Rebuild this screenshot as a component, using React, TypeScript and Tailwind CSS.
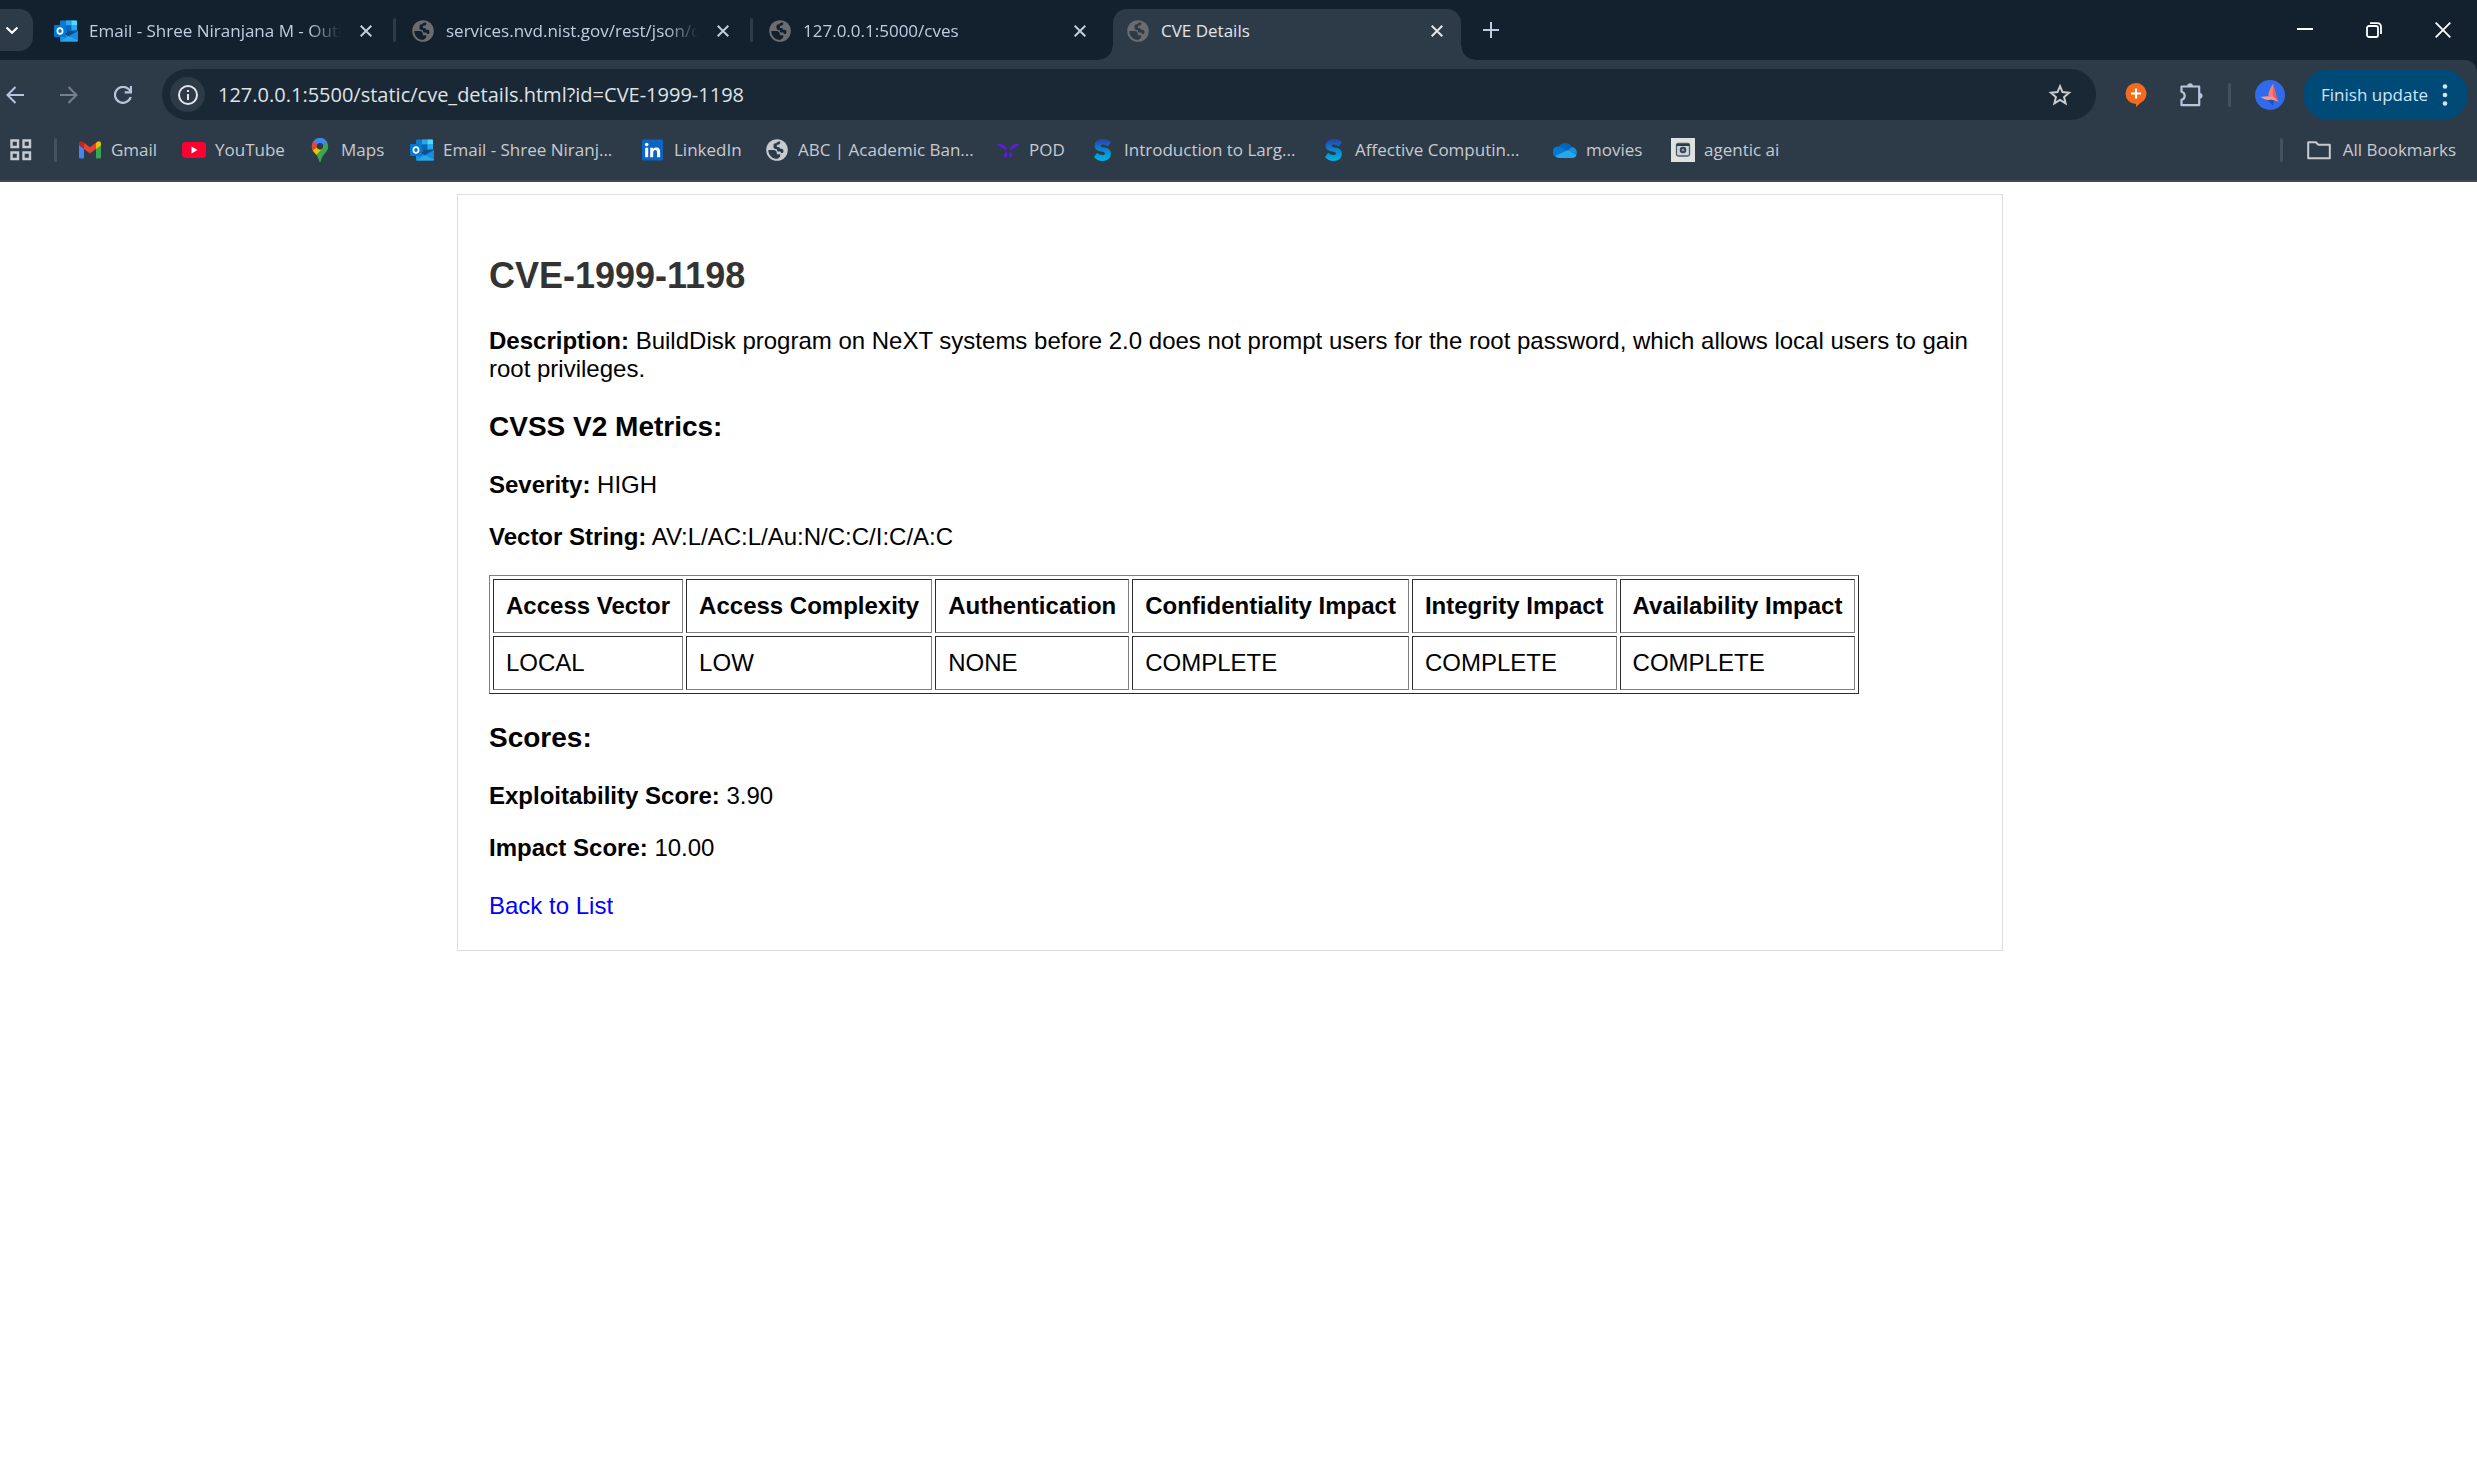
import React from "react";

const uiFont = "font-['Open_Sans','Noto_Sans',sans-serif]";

function Globe({ className, hole }: { className: string; hole: string }) {
  return (
    <svg viewBox="0 0 24 24" className={"size-6 shrink-0 " + className} fill="currentColor">
      <circle cx="12" cy="12" r="10.8" />
      <g fill={hole}>
        <path d="M3.300 12H8.500c2 0 3.300 1.200 3.300 2.900v1.300h3.400v2.400l-2.400 2.200c-5.200.4-9.500-3.400-9.500-8.800Z" />
        <path d="M15.200 3.600v1.200c0 1.100-.8 1.900-1.900 1.900h-1.400v2.200h1.400c1.100 0 1.700.8 1.700 1.800h1.500c1.100 0 1.900.8 1.900 1.900v1.200c0 .8-.7 1.300-1.400 1.300-.9 0-1.500-.6-1.700-1.500h-1.700c-1 0-1.800-.8-1.800-1.800v-.9h-1.300c-1.100 0-2-.9-2-2V7.200c0-1.100.9-1.900 1.900-1.900h.9c.4-1.300 2.100-2.100 3.900-1.700Z" />
      </g>
    </svg>
  );
}

function Outlook() {
  return (
    <svg viewBox="0 0 24 24" className="size-6 shrink-0">
      <path d="M7 1.500h15a1 1 0 0 1 1 1V14H6V2.500a1 1 0 0 1 1-1Z" fill="#0f78d4" />
      <path d="M12 1.500h5.500v5H12z" fill="#28a8ea" />
      <path d="M17.500 1.500H22a1 1 0 0 1 1 1v4h-5.500z" fill="#50d9ff" />
      <path d="M12 6.500h5.500v5H12z" fill="#0364b8" />
      <path d="M17.500 6.500H23v5h-5.500z" fill="#28a8ea" />
      <path d="M6 12.500 15 17l9-5v9.500a1 1 0 0 1-1 1H7a1 1 0 0 1-1-1Z" fill="#1490df" />
      <path d="M6 22.500 15 17l9 4.500a1 1 0 0 1-1 1Z" fill="#28a8ea" />
      <path d="M13 12 24 11.500v1l-8.500 5L13 16Z" fill="#0a4f8f" />
      <path d="M15 17l9-5v9.500Z" fill="#1b8be0" />
      <rect x="0" y="6" width="12" height="12" rx="1" fill="#0078d4" />
      <ellipse cx="6" cy="12" rx="2.600" ry="2.900" fill="none" stroke="#fff" strokeWidth="1.700" />
    </svg>
  );
}

function Gmail() {
  return (
    <svg viewBox="0 0 24 24" className="size-6 shrink-0">
      <path d="M1 20.500V6l5 3.700v10.800H2.500A1.500 1.500 0 0 1 1 19Z" fill="#4285f4" />
      <path d="M18 20.500V9.700L23 6v13a1.500 1.500 0 0 1-1.500 1.500Z" fill="#34a853" />
      <path d="M18 4.900v6l5-3.700V5.500c0-2-2.200-2.900-3.700-1.700Z" fill="#fbbc04" />
      <path d="M6 10.900V4.800l6 4.500 6-4.500v6.100l-6 4.500Z" fill="#ea4335" />
      <path d="M1 5.500v1.700l5 3.700V4.800L4.700 3.800C3.200 2.700 1 3.600 1 5.500Z" fill="#c5221f" />
    </svg>
  );
}

function YouTube() {
  return (
    <svg viewBox="0 0 24 24" className="size-6 shrink-0">
      <rect x="0" y="4" width="24" height="16" rx="4" fill="#ff0033" />
      <path d="M9.500 8.600v6.800l6-3.400Z" fill="#fff" />
    </svg>
  );
}

function Maps() {
  return (
    <svg viewBox="0 0 24 24" className="size-6 shrink-0">
      <clipPath id="pin">
        <path d="M12 0a8.200 8.200 0 0 0-8.200 8.200c0 3 1.200 4.600 3 6.900 2.200 2.600 3.300 4.200 4.200 7.400.3 1 .5 1.500 1 1.500s.7-.5 1-1.500c.9-3.200 2-4.800 4.200-7.400 1.800-2.300 3-3.900 3-6.900A8.200 8.200 0 0 0 12 0Z" />
      </clipPath>
      <g clipPath="url(#pin)">
        <path d="M0 0h24v24H0z" fill="#34a853" />
        <path d="M0 10 5 12 12 8 16 9 7 18 0 16Z" fill="#fbbc04" />
        <path d="M4 0h20v3l-5 1-7 8-8-8z" fill="#4285f4" />
        <path d="M0 3h5.500L10 7 5 12.500 0 12z" fill="#ea4335" />
      </g>
      <circle cx="12" cy="8.200" r="3.200" fill="#2d3b49" />
    </svg>
  );
}

function LinkedIn() {
  return (
    <svg viewBox="0 0 24 24" className="size-6 shrink-0">
      <rect x="1" y="1.500" width="21" height="21" rx="1.500" fill="#0a66c2" />
      <circle cx="5.700" cy="6.500" r="1.800" fill="#fff" />
      <path d="M4.200 9.700h3v9.600h-3zM9.200 9.700H12V11c.6-.9 1.700-1.600 3.200-1.600 3 0 3.900 1.900 3.900 4.600v5.300h-3v-4.800c0-1.500-.4-2.500-1.800-2.500-1.500 0-2.100 1.100-2.100 2.500v4.800h-3z" fill="#fff" />
    </svg>
  );
}

function Pod() {
  return (
    <svg viewBox="0 0 24 24" className="size-6 shrink-0" fill="#5b1fd6">
      <path d="M1 6c4-.6 8 .6 9.600 4.800.2 1-.1 1.600-.6 2C8.200 11 6.500 10.400 5 9.300 3.300 8.200 2.300 7 1 6Z" />
      <path d="M23.500 6c-4-.6-8 .6-9.600 4.800-.2 1 .1 1.600.6 2 1.800-1.800 3.500-2.400 5-3.500 1.700-1.100 2.700-2.300 4-3.300Z" />
      <path d="M11 13.500v6H8.600c-.8-1-.8-2.400.2-3.700ZM13.500 13.500v6h2.400c.8-1 .8-2.400-.2-3.700Z" />
    </svg>
  );
}

function Scribe() {
  return (
    <svg viewBox="0 0 24 24" className="size-6 shrink-0">
      <linearGradient id="wave" x1="0" y1="0" x2="0" y2="1">
        <stop offset="0" stopColor="#2a3fa8" />
        <stop offset="0.5" stopColor="#0a86d0" />
        <stop offset="1" stopColor="#00b4e6" />
      </linearGradient>
      <path d="M19 3.200C16.800 1.600 14.500 1 12 1 7 1 3.600 3.600 3.600 7.600c0 3.700 2.600 5.300 6.600 6 2.800.5 3.700.8 3.700 1.900 0 1-1 1.500-2.600 1.500-2 0-3.600-1-5.100-2.300L3 19c2.200 2.500 5 4 8.500 4 5 0 8.400-2.700 8.400-7.200 0-3.700-2.500-5.400-6.300-6.200-2.700-.5-3.700-.8-3.700-1.700 0-.8.700-1.400 2.100-1.400 1.700 0 3.200.9 4.500 2L20 4.500Z" fill="url(#wave)" />
    </svg>
  );
}

function OneDrive() {
  return (
    <svg viewBox="0 0 24 24" className="size-6 shrink-0">
      <path d="M5.500 9.500a7.300 7.300 0 0 1 13.200-.5L13 13Z" fill="#0364b8" />
      <path d="M5.600 8.500c1.200 0 2.200.3 3.200.9L17 14.500 4 19A5.300 5.300 0 0 1 5.600 8.500Z" fill="#0078d4" />
      <path d="M18.600 9A5.300 5.300 0 0 1 23.500 16L14 13Z" fill="#1490df" />
      <path d="M2 18 14.500 12.300 23.600 16.500A4.500 4.500 0 0 1 19.500 20H5.500A5.300 5.300 0 0 1 2 18Z" fill="#28a8ea" />
    </svg>
  );
}

function Agentic() {
  return (
    <svg viewBox="0 0 24 24" className="size-6 shrink-0">
      <path d="M0 0h24v24H0z" fill="#dfe1df" />
      <rect x="5.500" y="5.500" width="13" height="12.500" rx="1.800" fill="#c9d3da" stroke="#4b5c6b" strokeWidth="1.300" />
      <path d="M5.500 7h13" stroke="#2d3b49" strokeWidth="2" />
      <circle cx="12" cy="12" r="3.300" fill="#37444f" />
      <circle cx="12" cy="12" r="1.300" fill="#8b98a3" />
    </svg>
  );
}

function Cross() {
  return (
    <svg viewBox="0 0 12 12" className="size-3" fill="none" stroke="currentColor" strokeWidth="2">
      <path d="m.700.700 10.600 10.600M11.300.700.700 11.300" />
    </svg>
  );
}

function Tab({ title, icon, active, last }: { title: string; icon: React.ReactNode; active?: boolean; last?: boolean }) {
  return (
    <>
      <div
        className={
          active
            ? "relative flex h-[51px] w-[348px] items-center self-end rounded-t-[14px] bg-[#2d3b49] pb-2 pl-[13px] pr-[15px] text-[#e3e5ea]"
            : "flex h-[51px] w-[348px] items-center self-end pb-2 pl-3 pr-[15px] text-[#c0cde0]"
        }
      >
        {active && (
          <>
            <span className="absolute -left-[14px] bottom-0 size-[14px] bg-[radial-gradient(circle_at_0_0,#12212d_13px,#2d3b49_14px)]" />
            <span className="absolute -right-[14px] bottom-0 size-[14px] bg-[radial-gradient(circle_at_100%_0,#12212d_13px,#2d3b49_14px)]" />
          </>
        )}
        {icon}
        <button
          className={
            "ml-[11px] mr-[13px] min-w-0 flex-1 overflow-hidden whitespace-nowrap pt-px text-left text-[17px] leading-6 " +
            (active ? "" : "[mask-image:linear-gradient(to_right,black_220px,transparent_252px)]")
          }
        >
          {title}
        </button>
        <button aria-label={"Close " + title} className="grid size-[18px] place-items-center">
          <Cross />
        </button>
      </div>
      {!last && <span className="mx-[3px] h-6 w-[3px] self-center rounded-sm bg-[#2d3b49]" />}
    </>
  );
}

function Bookmark({ icon, label, width }: { icon: React.ReactNode; label: string; width: string }) {
  return (
    <a href="#" className={"flex shrink-0 items-center gap-[9px] whitespace-nowrap " + width}>
      {icon}
      <span>{label}</span>
    </a>
  );
}

function Browser() {
  return (
    <header className={"bg-[#12212d] " + uiFont}>
      <div className="flex h-[60px] items-stretch">
        <button aria-label="Search tabs" className="mr-[9px] mt-[9px] grid h-[42px] w-[33px] place-items-center rounded-r-[14px] bg-[#2d3b49] pr-[9px] text-white">
          <svg viewBox="0 0 12 12" className="size-3" fill="none" stroke="currentColor" strokeWidth="2.200">
            <path d="m.500 3.500 5.500 5.200 5.500-5.200" />
          </svg>
        </button>
        <Tab title="Email - Shree Niranjana M - Outlook" icon={<Outlook />} />
        <Tab title="services.nvd.nist.gov/rest/json/cves" icon={<Globe className="text-[#6b6c6f]" hole="#12212d" />} />
        <Tab title="127.0.0.1:5000/cves" icon={<Globe className="text-[#6b6c6f]" hole="#12212d" />} last />
        <div className="ml-[9px] flex">
          <Tab title="CVE Details" icon={<Globe className="text-[#6b6c6f]" hole="#2d3b49" />} active last />
        </div>
        <button aria-label="New tab" className="ml-[21px] grid w-[18px] place-items-center text-[#c0cde0]">
          <svg viewBox="0 0 16 16" className="size-4" fill="none" stroke="currentColor" strokeWidth="2">
            <path d="M8 0v16M0 8h16" />
          </svg>
        </button>
        <div className="ml-auto flex text-white">
          <button aria-label="Minimize" className="grid w-[69px] place-items-center">
            <svg viewBox="0 0 16 16" className="size-4" stroke="currentColor" strokeWidth="2">
              <path d="M0 7h16" />
            </svg>
          </button>
          <button aria-label="Restore" className="grid w-[69px] place-items-center">
            <svg viewBox="0 0 16 16" className="size-4" fill="none" stroke="currentColor" strokeWidth="1.800">
              <rect x="1" y="4" width="11" height="11" rx="2" />
              <path d="M4 1.200h7.500A3.500 3.500 0 0 1 15 4.700V12" />
            </svg>
          </button>
          <button aria-label="Close window" className="grid w-[69px] place-items-center">
            <svg viewBox="0 0 16 16" className="size-4" fill="none" stroke="currentColor" strokeWidth="1.800">
              <path d="m.700.700 14.600 14.600M15.300.700.700 15.300" />
            </svg>
          </button>
        </div>
      </div>

      <div className="rounded-tr-xl border-b-2 border-[#46494d] bg-[#2d3b49]">
        <div className="flex items-center pr-[9px] pt-[9px]">
          <button aria-label="Back" className="ml-[6px] text-[#b5c6dc]">
            <svg viewBox="0 0 18 18" className="size-[18px]" fill="none" stroke="currentColor" strokeWidth="2">
              <path d="M18 9H1.500M9.500 1 1.500 9l8 8" />
            </svg>
          </button>
          <button aria-label="Forward" className="ml-9 text-[#75808c]">
            <svg viewBox="0 0 18 18" className="size-[18px]" fill="none" stroke="currentColor" strokeWidth="2">
              <path d="M0 9h16.500M8.500 1l8 8-8 8" />
            </svg>
          </button>
          <button aria-label="Reload" className="ml-9 text-[#b5c6dc]">
            <svg viewBox="0 0 18 18" className="size-[18px]" fill="none" stroke="currentColor" strokeWidth="2.200">
              <path d="M16.700 11A8 8 0 1 1 14.800 3.300L17 5.500" />
              <path d="M17 0v6.300h-6.300" />
            </svg>
          </button>
          <div className="ml-[30px] mr-[29px] flex h-[51px] flex-1 items-center rounded-full bg-[#192834] pl-2 pr-6">
            <button aria-label="View site information" className="grid size-[35px] place-items-center rounded-full bg-[#2d3b49] text-[#e3e5ea]">
              <svg viewBox="0 0 20 20" className="size-5" fill="none" stroke="currentColor" strokeWidth="2">
                <circle cx="10" cy="10" r="9" />
                <path d="M10 9v6M10 5v2" />
              </svg>
            </button>
            <input
              aria-label="Address"
              className="ml-[13px] min-w-0 flex-1 bg-transparent text-xl leading-7 text-[#dfe2e6] outline-none"
              defaultValue="127.0.0.1:5500/static/cve_details.html?id=CVE-1999-1198"
            />
            <button aria-label="Bookmark this page" className="text-[#c9ccd1]">
              <svg viewBox="0 0 24 24" className="size-6" fill="none" stroke="currentColor" strokeWidth="2">
                <path d="m12 3.200 2.500 5.900 6.500.6-4.900 4.300 1.500 6.400-5.600-3.400-5.600 3.400L7.900 14 3 9.700l6.500-.6Z" />
              </svg>
            </button>
          </div>
          <button aria-label="Extension">
            <svg viewBox="0 0 22 26" className="h-[26px] w-[22px]">
              <path d="M11 1a10.500 10.500 0 0 1 4 20.200L11 25v-3A10.500 10.500 0 0 1 11 1Z" fill="#f26b21" />
              <path d="M11 6.500v10M6 11.500h10" stroke="#fff" strokeWidth="2.200" />
            </svg>
          </button>
          <button aria-label="Extensions" className="ml-[31px] text-[#b5c6dc]">
            <svg viewBox="0 0 26 26" className="size-[26px]" fill="none" stroke="currentColor" strokeWidth="2.200" strokeLinejoin="round">
              <path d="M3.500 4.500h17.700v18.700H3.500v-5.400a4.100 4.100 0 0 0 0-8Z" />
              <path d="M9.300 4a2.800 2.800 0 0 1 5.600 0ZM21.700 11a2.800 2.800 0 0 1 0 5.600Z" fill="currentColor" stroke="none" />
            </svg>
          </button>
          <span className="ml-6 h-6 w-[3px] rounded-sm bg-[#44515f]" />
          <button aria-label="Profile" className="ml-6">
            <svg viewBox="0 0 30 30" className="size-[30px]">
              <circle cx="15" cy="15" r="15" fill="#2f6bea" />
              <path d="m12 19 6 7 1-8 4 3-6-6Z" fill="#2350b8" />
              <path d="M18 4c-2 3-4.500 7-4.700 11.500L18 18l3.500-2Z" fill="#ff7d70" />
              <path d="M5.500 17c5-.8 10-1.300 14.500.5l4 4.500c-3-1.300-6-2.500-8.500-2.200-3.500.7-6-.3-10-2.800Z" fill="#ff9488" />
              <path d="m18 4 5 17-5-5Z" fill="#e85f5c" />
            </svg>
          </button>
          <button className="ml-[18px] flex h-[51px] w-[165px] items-center justify-between rounded-full bg-[#004a77] pl-[18px] pr-5 text-[17px] text-[#cfe6fb]">
            <span>Finish update</span>
            <svg viewBox="0 0 6 22" className="h-[22px] w-[6px]" fill="currentColor">
              <circle cx="3" cy="2.500" r="2.300" />
              <circle cx="3" cy="11" r="2.300" />
              <circle cx="3" cy="19.500" r="2.300" />
            </svg>
          </button>
        </div>

        <nav className="flex h-[60px] items-center pr-[21px] text-[17px] leading-6 text-[#c7cacf]">
          <button aria-label="Apps" className="ml-[10px] w-[22px]">
            <svg viewBox="0 0 22 22" className="size-[22px]" fill="none" stroke="currentColor" strokeWidth="2.400">
              <path d="M1.500 1.500h6.500v6.500H1.500zM13.500 1.500h6.500v6.500h-6.500zM1.500 13.500h6.500v6.500H1.500zM13.500 13.500h6.500v6.500h-6.500z" />
            </svg>
          </button>
          <span className="ml-[22px] mr-[21px] h-6 w-[3px] shrink-0 rounded-sm bg-[#44515f]" />
          <Bookmark icon={<Gmail />} label="Gmail" width="w-[104px]" />
          <Bookmark icon={<YouTube />} label="YouTube" width="w-[126px]" />
          <Bookmark icon={<Maps />} label="Maps" width="w-[102px]" />
          <Bookmark icon={<Outlook />} label="Email - Shree Niranj..." width="w-[231px]" />
          <Bookmark icon={<LinkedIn />} label="LinkedIn" width="w-[124px]" />
          <Bookmark icon={<Globe className="text-[#c7cacf]" hole="#2d3b49" />} label="ABC | Academic Ban..." width="w-[231px]" />
          <Bookmark icon={<Pod />} label="POD" width="w-[95px]" />
          <Bookmark icon={<Scribe />} label="Introduction to Larg..." width="w-[231px]" />
          <Bookmark icon={<Scribe />} label="Affective Computin..." width="w-[231px]" />
          <Bookmark icon={<OneDrive />} label="movies" width="w-[118px]" />
          <Bookmark icon={<Agentic />} label="agentic ai" width="w-[118px]" />
          <span className="ml-auto mr-6 h-6 w-[3px] rounded-sm bg-[#44515f]" />
          <button className="flex items-center gap-3">
            <svg viewBox="0 0 24 24" className="size-6" fill="none" stroke="currentColor" strokeWidth="2" strokeLinejoin="round">
              <path d="M1.200 4.200h7.600l2.600 2.600h11.400v13.400H1.200Z" />
            </svg>
            All Bookmarks
          </button>
        </nav>
      </div>
    </header>
  );
}

const metrics = [
  ["Access Vector", "LOCAL"],
  ["Access Complexity", "LOW"],
  ["Authentication", "NONE"],
  ["Confidentiality Impact", "COMPLETE"],
  ["Integrity Impact", "COMPLETE"],
  ["Availability Impact", "COMPLETE"],
];

const cell = "border border-b-[#808080] border-l-[#2c2c2c] border-r-[#808080] border-t-[#2c2c2c] p-3 text-left";

export default function App() {
  return (
    <div className="min-h-screen bg-white">
      <Browser />
      <main className="pr-[17px] pt-3 font-['Liberation_Sans',Arial,sans-serif] text-2xl leading-7 text-black">
        <article className="mx-auto w-full max-w-[1546px] border border-[#dddddd] px-[31px] py-[30px]">
          <h1 className="mt-[30px] text-4xl font-bold leading-[42px] text-[#333333]">CVE-1999-1198</h1>
          <p className="mt-[30px]">
            <strong>Description:</strong> BuildDisk program on NeXT systems before 2.0 does not prompt users for the root
            password, which allows local users to gain root privileges.
          </p>
          <h2 className="my-7 text-[28px] font-bold leading-8">CVSS V2 Metrics:</h2>
          <p>
            <strong>Severity:</strong> HIGH
          </p>
          <p className="my-6">
            <strong>Vector String:</strong> AV:L/AC:L/Au:N/C:C/I:C/A:C
          </p>
          <table className="border-separate border-spacing-[3px] border border-b-[#2c2c2c] border-l-[#808080] border-r-[#2c2c2c] border-t-[#808080]">
            <thead>
              <tr>
                {metrics.map(([name]) => (
                  <th key={name} scope="col" className={cell}>
                    {name}
                  </th>
                ))}
              </tr>
            </thead>
            <tbody>
              <tr>
                {metrics.map(([name, value]) => (
                  <td key={name} className={cell}>
                    {value}
                  </td>
                ))}
              </tr>
            </tbody>
          </table>
          <h2 className="my-7 text-[28px] font-bold leading-8">Scores:</h2>
          <p>
            <strong>Exploitability Score:</strong> 3.90
          </p>
          <p className="mt-6">
            <strong>Impact Score:</strong> 10.00
          </p>
          <a href="#" className="mt-[30px] inline-block align-top text-[#0000ff]">
            Back to List
          </a>
        </article>
      </main>
    </div>
  );
}
